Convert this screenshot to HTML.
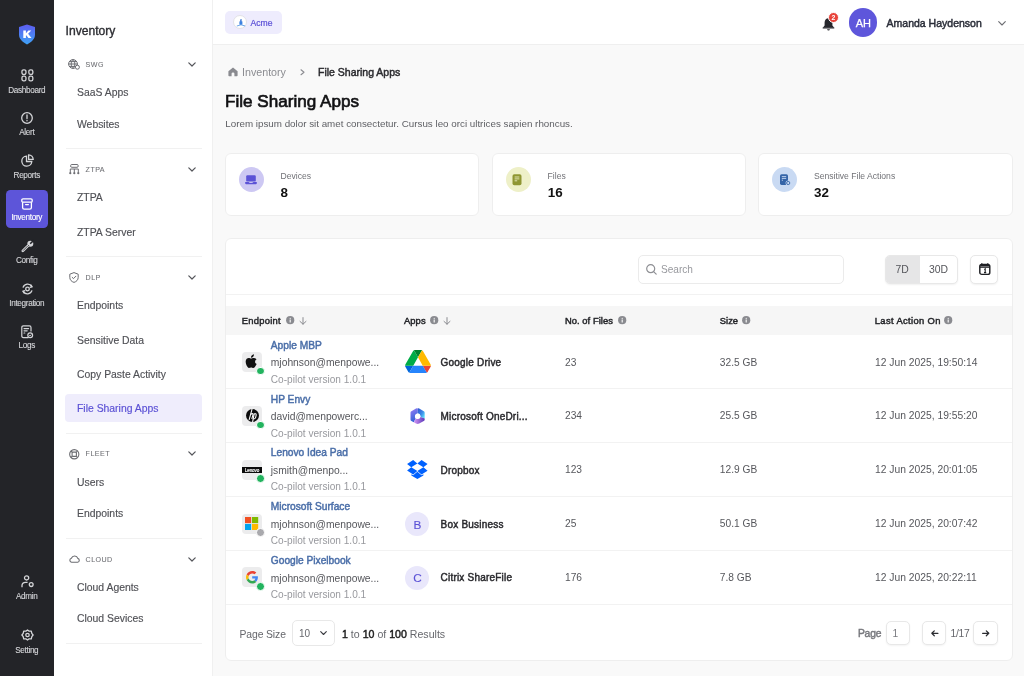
<!DOCTYPE html>
<html><head><meta charset="utf-8">
<style>
*{box-sizing:border-box;margin:0;padding:0}
html,body{width:1024px;height:676px;overflow:hidden}
body{position:relative;background:#f9f9f9;font-family:"Liberation Sans",sans-serif;color:#222}
.a{position:absolute}
.t{position:absolute;white-space:nowrap;line-height:20px;height:20px}
.b{font-weight:bold}
.sb{-webkit-text-stroke-width:0.45px}
svg{position:absolute;overflow:visible}
</style></head><body>
<div id="root" style="position:absolute;left:0;top:0;width:1024px;height:676px;will-change:transform">
<!-- dark rail -->
<div class="a" style="left:0;top:0;width:213px;height:676px;background:#fff;border-right:1px solid #f0f0f0"></div>
<div class="a" style="left:0;top:0;width:53.5px;height:676px;background:#232428"></div>
<!-- top bar -->
<div class="a" style="left:213px;top:0;width:811px;height:45px;background:#fff;border-bottom:1px solid #efefef"></div>

<!-- RAIL -->
<div id="rail" style="color:#d4d5d8;font-size:8.2px;letter-spacing:-0.33px;-webkit-text-stroke-width:0.12px">
<svg style="left:18px;top:23.5px" width="18" height="21" viewBox="0 0 18 21">
<defs><linearGradient id="sg" x1="0" y1="0" x2="0" y2="1"><stop offset="0" stop-color="#5d5cf0"/><stop offset="1" stop-color="#3ea2f5"/></linearGradient></defs>
<path d="M9 0.6 L17 3 L17 10.5 C17 15 13.5 18.3 9 20.4 C4.5 18.3 1 15 1 10.5 L1 3 Z" fill="url(#sg)"/>
<path d="M5.3 6.4 H7.9 V9.3 L10.4 6.4 H13.3 L10.1 9.8 L13.5 14.1 H10.4 L8.3 11.3 L7.9 11.7 V14.1 H5.3 Z" fill="#fff"/>
</svg>
<!-- dashboard -->
<svg style="left:20.5px;top:69px" width="13" height="13" viewBox="0 0 13 13" fill="none" stroke="#d4d5d8" stroke-width="1.3"><rect x="0.95" y="0.85" width="4" height="4.6" rx="1.6"/><rect x="7.85" y="0.85" width="4" height="4.6" rx="1.6"/><rect x="0.95" y="7.2" width="4" height="4.6" rx="1.6"/><rect x="7.85" y="7.2" width="4" height="4.6" rx="1.6"/></svg>
<div class="t" style="left:0;width:53.5px;text-align:center;top:80.6px">Dashboard</div>
<!-- alert -->
<svg style="left:21px;top:111.8px" width="12" height="12" viewBox="0 0 12 12" fill="none" stroke="#d4d5d8" stroke-width="1.3"><circle cx="6" cy="6" r="5.3"/><path d="M6 3 V6.6 M6 8.4 V8.8" stroke-linecap="round"/></svg>
<div class="t" style="left:0;width:53.5px;text-align:center;top:123.2px">Alert</div>
<!-- reports -->
<svg style="left:20.5px;top:154px" width="13" height="13" viewBox="0 0 13 13" fill="none" stroke="#d4d5d8" stroke-width="1.3"><path d="M5.5 2.2 A5 5 0 1 0 10.8 7.5 H5.5 Z"/><path d="M7.6 0.8 A4.6 4.6 0 0 1 12.2 5.4 H7.6 Z"/></svg>
<div class="t" style="left:0;width:53.5px;text-align:center;top:165.8px">Reports</div>
<!-- inventory active -->
<div class="a" style="left:5.6px;top:190.4px;width:42.5px;height:37.2px;background:#5d55d9;border-radius:4.5px"></div>
<svg style="left:21px;top:197.5px" width="12" height="12" viewBox="0 0 12 12" fill="none" stroke="#fff" stroke-width="1.3"><rect x="0.8" y="0.8" width="10.4" height="3.4" rx="1.2"/><path d="M1.6 4.2 V9.6 Q1.6 11.2 3.2 11.2 H8.8 Q10.4 11.2 10.4 9.6 V4.2"/><path d="M4.6 6.6 H7.4" stroke-linecap="round"/></svg>
<div class="t" style="left:0;width:53.5px;text-align:center;top:208.3px;color:#fff">Inventory</div>
<!-- config -->
<svg style="left:20.5px;top:239.5px" width="13" height="13" viewBox="0 0 13 13"><path d="M1.8 10.9 L6.6 6.1" stroke="#d4d5d8" stroke-width="2.7" stroke-linecap="round"/><path d="M2.3 10.4 L6.4 6.3" stroke="#232428" stroke-width="0.75" stroke-linecap="round"/><circle cx="9.3" cy="3.7" r="3" fill="#d4d5d8"/><path d="M9.2 3.8 L12.6 0.4" stroke="#232428" stroke-width="1.5"/><circle cx="7.6" cy="5.4" r="0.5" fill="#232428"/></svg>
<div class="t" style="left:0;width:53.5px;text-align:center;top:251.4px">Config</div>
<!-- integration -->
<svg style="left:20.5px;top:282.5px" width="13" height="12" viewBox="0 0 13 12" fill="none" stroke="#d4d5d8" stroke-width="1.3"><circle cx="6.5" cy="6" r="1.8"/><path d="M2 4.6 A4.8 4.8 0 0 1 10.8 3.6"/><path d="M11 7.4 A4.8 4.8 0 0 1 2.2 8.4"/><path d="M9.6 1.6 L11.2 3.8 L8.8 4.4" stroke-linejoin="round"/><path d="M3.4 10.4 L1.8 8.2 L4.2 7.6" stroke-linejoin="round"/></svg>
<div class="t" style="left:0;width:53.5px;text-align:center;top:293.8px">Integration</div>
<!-- logs -->
<svg style="left:21px;top:324.5px" width="12" height="13.5" viewBox="0 0 12 13.5" fill="none" stroke="#d4d5d8" stroke-width="1.2"><path d="M7.5 12.6 H2.4 Q0.8 12.6 0.8 11 V2.4 Q0.8 0.8 2.4 0.8 H8.4 Q10 0.8 10 2.4 V6.4"/><path d="M3 3.6 H7.6 M3 5.8 H6.2 M3 8 H3.8" stroke-linecap="round"/><circle cx="9.2" cy="10.2" r="2.4"/><path d="M8.2 10.2 L9 11 L10.2 9.6" stroke-width="0.9"/></svg>
<div class="t" style="left:0;width:53.5px;text-align:center;top:336.1px">Logs</div>
<!-- admin -->
<svg style="left:20.5px;top:574.5px" width="13" height="13" viewBox="0 0 13 13" fill="none" stroke="#d4d5d8" stroke-width="1.3"><circle cx="5.6" cy="2.9" r="2.1"/><path d="M1 12.2 V10.6 Q1 7.4 4.6 7.4 H6.6"/><circle cx="10.2" cy="9.6" r="1.9"/></svg>
<div class="t" style="left:0;width:53.5px;text-align:center;top:586.8px">Admin</div>
<!-- setting -->
<svg style="left:20.5px;top:629px" width="13" height="13" viewBox="0 0 13 13" fill="none" stroke="#d4d5d8" stroke-width="1.3"><path d="M6.5 0.9 L8.2 2.2 L10.3 2.2 L10.8 4.3 L12.1 6 L10.8 7.7 L10.3 9.8 L8.2 9.8 L6.5 11.1 L4.8 9.8 L2.7 9.8 L2.2 7.7 L0.9 6 L2.2 4.3 L2.7 2.2 L4.8 2.2 Z" stroke-linejoin="round"/><circle cx="6.5" cy="6" r="1.7"/></svg>
<div class="t" style="left:0;width:53.5px;text-align:center;top:640.8px">Setting</div>
</div>

<!-- SIDEBAR 2 -->
<div id="side">
<div class="t sb" style="left:65.6px;top:20.6px;font-size:12.1px;color:#2c2d32;-webkit-text-stroke-width:0.35px">Inventory</div>
<svg style="left:68px;top:59px" width="12" height="10.5" viewBox="0 0 12 10.5" fill="none" stroke="#6b6c71" stroke-width="1"><circle cx="5" cy="5" r="4.4"/><path d="M0.6 5 H9.4 M5 0.6 C2.6 3 2.6 7 5 9.4 M5 0.6 C7.4 3 7.4 7 5 9.4 M1.4 2.6 H8.6 M1.4 7.4 H8.6"/><circle cx="9.4" cy="8.2" r="2" fill="#fff"/></svg>
<div class="t" style="left:85.6px;top:54.7px;font-size:7.1px;letter-spacing:0.45px;color:#707176;-webkit-text-stroke-width:0.08px">SWG</div>
<svg style="left:188.3px;top:61.7px" width="8" height="5" viewBox="0 0 8 5" fill="none" stroke="#55565b" stroke-width="1.2" stroke-linecap="round" stroke-linejoin="round"><path d="M0.8 0.8 L4 4 L7.2 0.8"/></svg>
<div class="t" style="left:77px;top:83.3px;font-size:10.4px;color:#505156;-webkit-text-stroke-width:0.15px">SaaS Apps</div>
<div class="t" style="left:77px;top:114.5px;font-size:10.4px;color:#505156;-webkit-text-stroke-width:0.15px">Websites</div>
<div class="a" style="left:65.5px;top:147.8px;width:136.5px;height:1px;background:#f1f1f1"></div>
<svg style="left:68.6px;top:163.6px" width="10.5" height="11" viewBox="0 0 10.5 11" fill="none" stroke="#6e6f74" stroke-width="1"><rect x="1.6" y="0.5" width="7.6" height="2.8" rx="1.2"/><path d="M1.3 5 H9.3 M1.3 5 V8.6 M5.3 5 V8.6 M9.3 5 V8.6"/><circle cx="1.3" cy="9.2" r="1.1" fill="#6e6f74" stroke="none"/><circle cx="5.3" cy="9.2" r="1.1" fill="#6e6f74" stroke="none"/><circle cx="9.3" cy="9.2" r="1.1" fill="#6e6f74" stroke="none"/></svg>
<div class="t" style="left:85.6px;top:159.9px;font-size:7.1px;letter-spacing:0.45px;color:#707176;-webkit-text-stroke-width:0.08px">ZTPA</div>
<svg style="left:188.3px;top:166.9px" width="8" height="5" viewBox="0 0 8 5" fill="none" stroke="#55565b" stroke-width="1.2" stroke-linecap="round" stroke-linejoin="round"><path d="M0.8 0.8 L4 4 L7.2 0.8"/></svg>
<div class="t" style="left:77px;top:188.4px;font-size:10.4px;color:#505156;-webkit-text-stroke-width:0.15px">ZTPA</div>
<div class="t" style="left:77px;top:222.8px;font-size:10.4px;color:#505156;-webkit-text-stroke-width:0.15px">ZTPA Server</div>
<div class="a" style="left:65.5px;top:256.0px;width:136.5px;height:1px;background:#f1f1f1"></div>
<svg style="left:69px;top:272px" width="10" height="11" viewBox="0 0 10 11" fill="none" stroke="#6b6c71" stroke-width="1" stroke-linejoin="round"><path d="M5 0.6 L9.2 2.2 V5.4 C9.2 8 7.4 9.6 5 10.4 C2.6 9.6 0.8 8 0.8 5.4 V2.2 Z"/><path d="M3.2 5.4 L4.5 6.6 L6.9 4.2" stroke-linecap="round"/></svg>
<div class="t" style="left:85.6px;top:267.8px;font-size:7.1px;letter-spacing:0.45px;color:#707176;-webkit-text-stroke-width:0.08px">DLP</div>
<svg style="left:188.3px;top:274.8px" width="8" height="5" viewBox="0 0 8 5" fill="none" stroke="#55565b" stroke-width="1.2" stroke-linecap="round" stroke-linejoin="round"><path d="M0.8 0.8 L4 4 L7.2 0.8"/></svg>
<div class="t" style="left:77px;top:296.4px;font-size:10.4px;color:#505156;-webkit-text-stroke-width:0.15px">Endpoints</div>
<div class="t" style="left:77px;top:330.8px;font-size:10.4px;color:#505156;-webkit-text-stroke-width:0.15px">Sensitive Data</div>
<div class="t" style="left:77px;top:365.2px;font-size:10.4px;color:#505156;-webkit-text-stroke-width:0.15px">Copy Paste Activity</div>
<div class="a" style="left:65.4px;top:394px;width:136.4px;height:28px;background:#efedfc;border-radius:4px"></div>
<div class="t" style="left:77px;top:399.0px;font-size:10.4px;color:#5a50d5;-webkit-text-stroke-width:0.15px">File Sharing Apps</div>
<div class="a" style="left:65.5px;top:432.8px;width:136.5px;height:1px;background:#f1f1f1"></div>
<svg style="left:68.8px;top:448.6px" width="10.5" height="10.5" viewBox="0 0 10.5 10.5" fill="none" stroke="#6b6c71" stroke-width="1.1"><circle cx="5.25" cy="5.25" r="4.6"/><rect x="3.1" y="3.1" width="4.3" height="4.3" rx="0.8"/><path d="M2 2 L3.3 3.3 M8.5 2 L7.2 3.3 M2 8.5 L3.3 7.2 M8.5 8.5 L7.2 7.2"/></svg>
<div class="t" style="left:85.6px;top:444.3px;font-size:7.1px;letter-spacing:0.45px;color:#707176;-webkit-text-stroke-width:0.08px">FLEET</div>
<svg style="left:188.3px;top:451.3px" width="8" height="5" viewBox="0 0 8 5" fill="none" stroke="#55565b" stroke-width="1.2" stroke-linecap="round" stroke-linejoin="round"><path d="M0.8 0.8 L4 4 L7.2 0.8"/></svg>
<div class="t" style="left:77px;top:472.9px;font-size:10.4px;color:#505156;-webkit-text-stroke-width:0.15px">Users</div>
<div class="t" style="left:77px;top:504.0px;font-size:10.4px;color:#505156;-webkit-text-stroke-width:0.15px">Endpoints</div>
<div class="a" style="left:65.5px;top:537.7px;width:136.5px;height:1px;background:#f1f1f1"></div>
<svg style="left:68.5px;top:555px" width="11" height="8" viewBox="0 0 11 8" fill="none" stroke="#6b6c71" stroke-width="1.1" stroke-linejoin="round"><path d="M2.6 7.3 H8.6 A2 2 0 0 0 8.8 3.4 A3.4 3.4 0 0 0 2.4 3.2 A2.1 2.1 0 0 0 2.6 7.3 Z"/></svg>
<div class="t" style="left:85.6px;top:549.6px;font-size:7.1px;letter-spacing:0.45px;color:#707176;-webkit-text-stroke-width:0.08px">CLOUD</div>
<svg style="left:188.3px;top:556.6px" width="8" height="5" viewBox="0 0 8 5" fill="none" stroke="#55565b" stroke-width="1.2" stroke-linecap="round" stroke-linejoin="round"><path d="M0.8 0.8 L4 4 L7.2 0.8"/></svg>
<div class="t" style="left:77px;top:578.2px;font-size:10.4px;color:#505156;-webkit-text-stroke-width:0.15px">Cloud Agents</div>
<div class="t" style="left:77px;top:609.3px;font-size:10.4px;color:#505156;-webkit-text-stroke-width:0.15px">Cloud Sevices</div>
<div class="a" style="left:65.5px;top:642.8px;width:136.5px;height:1px;background:#f1f1f1"></div>
</div>

<!-- HEADER -->
<div id="header">
<div class="a" style="left:224.8px;top:11px;width:57px;height:22.7px;background:#eeecfd;border-radius:5px"></div>
<div class="a" style="left:233.4px;top:15.3px;width:14px;height:14px;background:#fff;border:1px solid #e2e2e6;border-radius:50%"></div>
<svg style="left:235.5px;top:18px" width="10" height="9" viewBox="0 0 10 9"><path d="M4.2 1.6 L5.6 1 L5.6 6.4 L4.2 6.4 Z" fill="#2f6fd0"/><path d="M3.4 3.4 H6.4 V6.6 H3.4Z" fill="#3b82e0"/><path d="M0.8 8 Q5 5.6 9.2 8" stroke="#4a90e2" stroke-width="0.8" fill="none"/></svg>
<div class="t sb" style="left:250.5px;top:12.5px;font-size:8.6px;color:#5a4fd6;-webkit-text-stroke-width:0.2px">Acme</div>
<!-- bell -->
<svg style="left:821.5px;top:16.5px" width="13" height="14" viewBox="0 0 13 14"><path d="M6.5 1.2 C4 1.2 2.6 3.2 2.6 5.6 V8.4 L1 10.6 H12 L10.4 8.4 V5.6 C10.4 3.2 9 1.2 6.5 1.2 Z" fill="#26272c"/><rect x="0.6" y="10.2" width="11.8" height="1.4" rx="0.7" fill="#26272c"/><path d="M5 12.2 H8 Q7.6 13.4 6.5 13.4 Q5.4 13.4 5 12.2Z" fill="#26272c"/></svg>
<div class="a" style="left:827.6px;top:11.8px;width:11.6px;height:11.6px;background:#e8433b;border-radius:50%;border:1px solid #fff"></div>
<div class="t b" style="left:827.6px;width:11.6px;text-align:center;top:7.6px;font-size:6.8px;color:#fff">2</div>
<!-- avatar -->
<div class="a" style="left:848.9px;top:8.4px;width:28.6px;height:28.6px;background:#5e56db;border-radius:50%"></div>
<div class="t" style="left:848.9px;width:28.6px;text-align:center;top:12.6px;font-size:11px;color:#fff;letter-spacing:-0.3px;-webkit-text-stroke-width:0.25px">AH</div>
<div class="t sb" style="left:886.6px;top:12.5px;font-size:10.5px;color:#2a2d38">Amanda Haydenson</div>
<svg style="left:998.2px;top:20.6px" width="8" height="5" viewBox="0 0 8 5" fill="none" stroke="#6d6e73" stroke-width="1.1" stroke-linecap="round" stroke-linejoin="round"><path d="M0.7 0.7 L4 4 L7.3 0.7"/></svg>
</div>

<!-- MAIN -->
<div id="main">
<svg style="left:228.4px;top:67.2px" width="10" height="9.4" viewBox="0 0 10 9.4"><path d="M5 0.4 L9.6 4.2 V8.4 Q9.6 9.2 8.8 9.2 H6.4 V6.6 Q6.4 5.4 5 5.4 Q3.6 5.4 3.6 6.6 V9.2 H1.2 Q0.4 9.2 0.4 8.4 V4.2 Z" fill="#8a8b90"/></svg>
<div class="t" style="left:242px;top:62px;font-size:10.7px;color:#8b8c91">Inventory</div>
<svg style="left:299.8px;top:68.6px" width="5" height="6.5" viewBox="0 0 5 6.5" fill="none" stroke="#8b8c91" stroke-width="1.1" stroke-linecap="round" stroke-linejoin="round"><path d="M1 0.8 L4 3.25 L1 5.7"/></svg>
<div class="t sb" style="left:318px;top:62px;font-size:10.5px;color:#2a2a2e">File Sharing Apps</div>
<div class="t sb" style="left:225px;top:92.4px;font-size:17.1px;color:#111113;-webkit-text-stroke-width:0.65px">File Sharing Apps</div>
<div class="t" style="left:225.3px;top:114px;font-size:9.8px;color:#5f6065">Lorem ipsum dolor sit amet consectetur. Cursus leo orci ultrices sapien rhoncus.</div>
<div class="a" style="left:224.8px;top:153.3px;width:253.8px;height:62.3px;background:#fff;border:1px solid #eeeeee;border-radius:6px"></div>
<div class="a" style="left:238.5px;top:167.1px;width:25.3px;height:25.3px;background:#cdc8f3;border-radius:50%"></div>
<svg style="left:245.2px;top:175px" width="12" height="9.5" viewBox="0 0 12 9.5"><rect x="1.2" y="0.2" width="9.6" height="6.4" rx="1.2" fill="#5b52d6"/><path d="M0.2 6.9 H3.6 Q4.2 7.9 6 7.9 Q7.8 7.9 8.4 6.9 H11.8 V8.3 Q11.8 9.3 10.8 9.3 H1.2 Q0.2 9.3 0.2 8.3 Z" fill="#5b52d6"/></svg>
<div class="t" style="left:280.5px;top:165.5px;font-size:8.6px;color:#707176">Devices</div>
<div class="t b" style="left:280.6px;top:182.9px;font-size:13.4px;color:#111">8</div>
<div class="a" style="left:491.9px;top:153.3px;width:253.8px;height:62.3px;background:#fff;border:1px solid #eeeeee;border-radius:6px"></div>
<div class="a" style="left:505.6px;top:167.1px;width:25.3px;height:25.3px;background:#eef0c8;border-radius:50%"></div>
<svg style="left:512.2px;top:174px" width="10" height="11.5" viewBox="0 0 10 11.5"><rect x="0.5" y="0.3" width="9" height="11" rx="1.8" fill="#8f9632"/><path d="M2.6 3 H7.4 M2.6 4.9 H7.4 M2.6 6.8 H5.2" stroke="#e9ecbf" stroke-width="0.9"/></svg>
<div class="t" style="left:547.6px;top:165.5px;font-size:8.6px;color:#707176">Files</div>
<div class="t b" style="left:547.7px;top:182.9px;font-size:13.4px;color:#111">16</div>
<div class="a" style="left:758.3px;top:153.3px;width:254.4px;height:62.3px;background:#fff;border:1px solid #eeeeee;border-radius:6px"></div>
<div class="a" style="left:772.0px;top:167.1px;width:25.3px;height:25.3px;background:#c9daf3;border-radius:50%"></div>
<svg style="left:778.6px;top:173.5px" width="12" height="12" viewBox="0 0 12 12"><rect x="1" y="0.3" width="8" height="10.6" rx="1.6" fill="#3565a8"/><path d="M2.8 2.6 H7.2 M2.8 4.4 H7.2 M2.8 6.2 H4" stroke="#c9daf3" stroke-width="0.9"/><circle cx="9.2" cy="9" r="2.6" fill="#c9daf3"/><circle cx="9.2" cy="9" r="1.6" fill="none" stroke="#3565a8" stroke-width="0.9"/></svg>
<div class="t" style="left:814.0px;top:165.5px;font-size:8.6px;color:#707176">Sensitive File Actions</div>
<div class="t b" style="left:814.1px;top:182.9px;font-size:13.4px;color:#111">32</div>
<div class="a" style="left:224.8px;top:237.9px;width:788.2px;height:423.2px;background:#fff;border:1px solid #eeeeee;border-radius:6px;overflow:hidden">
</div>
<div class="a" style="left:638.3px;top:255.3px;width:206px;height:28.3px;background:#fff;border:1px solid #ebebeb;border-radius:5px"></div>
<svg style="left:646px;top:264px" width="11" height="11" viewBox="0 0 11 11" fill="none" stroke="#8e8f94" stroke-width="1.2" stroke-linecap="round"><circle cx="4.7" cy="4.7" r="4"/><path d="M7.6 7.6 L10.2 10.2"/></svg>
<div class="t" style="left:661px;top:260.2px;font-size:10.1px;color:#98999e">Search</div>
<div class="a" style="left:885.2px;top:255.3px;width:73px;height:28.3px;background:#fff;border:1px solid #e8e8e8;border-radius:5px;box-shadow:0 1px 2px rgba(0,0,0,0.06);overflow:hidden"><div class="a" style="left:0;top:0;width:33.9px;height:28.3px;background:#e6e6e7"></div></div>
<div class="t" style="left:885.2px;width:33.9px;text-align:center;top:259.5px;font-size:10.4px;color:#55565b">7D</div>
<div class="t" style="left:919.1px;width:39px;text-align:center;top:259.5px;font-size:10.4px;color:#55565b">30D</div>
<div class="a" style="left:970.4px;top:255.3px;width:27.7px;height:28.3px;background:#fff;border:1px solid #e8e8e8;border-radius:5px;box-shadow:0 1px 2px rgba(0,0,0,0.06)"></div>
<svg style="left:978.6px;top:263.4px" width="11.6" height="12.2" viewBox="0 0 11.6 12.2" fill="none" stroke="#1f2024" stroke-width="1.45"><rect x="0.8" y="1.6" width="10" height="9.8" rx="2"/><path d="M0.8 4.2 H10.8" stroke-width="1.2"/><path d="M1.4 2.6 H10.2" stroke-width="1.6"/><path d="M2.8 0.2 V2 M8.8 0.2 V2" stroke-width="1.3"/><path d="M5.3 6.6 L6.2 5.8 V9.6 M5 9.6 H7.2" stroke-width="1.1"/></svg>
<div class="a" style="left:225.8px;top:294px;width:786.2px;height:1px;background:#f2f2f2"></div>
<div class="a" style="left:225.8px;top:306.2px;width:786.2px;height:28.4px;background:#f6f6f6"></div>
<div class="t sb" style="left:241.8px;top:311.2px;font-size:9.4px;letter-spacing:0.25px;color:#232428">Endpoint</div>
<svg style="left:285.9px;top:316.4px" width="8.4" height="8.4" viewBox="0 0 8.4 8.4"><circle cx="4.2" cy="4.2" r="4.1" fill="#8a8b90"/><path d="M4.2 3.6 V6.4" stroke="#fff" stroke-width="1.1"/><circle cx="4.2" cy="2.3" r="0.6" fill="#fff"/></svg>
<svg style="left:299px;top:317px" width="8" height="8" viewBox="0 0 8 8" fill="none" stroke="#8a8b90" stroke-width="1" stroke-linecap="round" stroke-linejoin="round"><path d="M4 0.6 V7.2 M1 4.4 L4 7.2 L7 4.4"/></svg>
<div class="t sb" style="left:403.9px;top:311.2px;font-size:9.4px;letter-spacing:0.12px;color:#232428">Apps</div>
<svg style="left:430.4px;top:316.4px" width="8.4" height="8.4" viewBox="0 0 8.4 8.4"><circle cx="4.2" cy="4.2" r="4.1" fill="#8a8b90"/><path d="M4.2 3.6 V6.4" stroke="#fff" stroke-width="1.1"/><circle cx="4.2" cy="2.3" r="0.6" fill="#fff"/></svg>
<svg style="left:443.2px;top:317px" width="8" height="8" viewBox="0 0 8 8" fill="none" stroke="#8a8b90" stroke-width="1" stroke-linecap="round" stroke-linejoin="round"><path d="M4 0.6 V7.2 M1 4.4 L4 7.2 L7 4.4"/></svg>
<div class="t sb" style="left:564.9px;top:311.2px;font-size:9.4px;letter-spacing:0.06px;color:#232428">No. of Files</div>
<svg style="left:617.9px;top:316.4px" width="8.4" height="8.4" viewBox="0 0 8.4 8.4"><circle cx="4.2" cy="4.2" r="4.1" fill="#8a8b90"/><path d="M4.2 3.6 V6.4" stroke="#fff" stroke-width="1.1"/><circle cx="4.2" cy="2.3" r="0.6" fill="#fff"/></svg>
<div class="t sb" style="left:719.8px;top:311.2px;font-size:9.4px;letter-spacing:0px;color:#232428">Size</div>
<svg style="left:742.3px;top:316.4px" width="8.4" height="8.4" viewBox="0 0 8.4 8.4"><circle cx="4.2" cy="4.2" r="4.1" fill="#8a8b90"/><path d="M4.2 3.6 V6.4" stroke="#fff" stroke-width="1.1"/><circle cx="4.2" cy="2.3" r="0.6" fill="#fff"/></svg>
<div class="t sb" style="left:874.8px;top:311.2px;font-size:9.4px;letter-spacing:0.36px;color:#232428">Last Action On</div>
<svg style="left:944.2px;top:316.4px" width="8.4" height="8.4" viewBox="0 0 8.4 8.4"><circle cx="4.2" cy="4.2" r="4.1" fill="#8a8b90"/><path d="M4.2 3.6 V6.4" stroke="#fff" stroke-width="1.1"/><circle cx="4.2" cy="2.3" r="0.6" fill="#fff"/></svg>
<div class="a" style="left:241.8px;top:352.0px;width:20px;height:20px;background:#ececed;border-radius:4px"></div>
<svg style="left:245.3px;top:354.4px" width="13" height="14.2" viewBox="0.8 0 10 11.2"><path d="M8.6 6.4 C8.6 5 9.7 4.3 9.8 4.2 C9.1 3.2 8 3.1 7.7 3.1 C6.8 3 5.9 3.6 5.5 3.6 C5 3.6 4.3 3.1 3.6 3.1 C2.6 3.1 1.2 3.9 1.2 5.9 C1.2 8 2.7 11 3.8 11 C4.4 11 4.8 10.6 5.5 10.6 C6.3 10.6 6.6 11 7.2 11 C8.2 11 9.1 9.3 9.9 7.9 C8.9 7.5 8.6 6.9 8.6 6.4 Z M7.1 2.2 C7.6 1.6 7.8 0.9 7.7 0.2 C7.1 0.3 6.4 0.6 6 1.2 C5.6 1.6 5.3 2.3 5.4 3 C6.1 3 6.7 2.7 7.1 2.2 Z" fill="#111"/></svg>
<div class="a" style="left:256.2px;top:366.6px;width:8.6px;height:8.6px;background:#22b35e;border-radius:50%;border:1px solid #fff"></div>
<div class="t sb" style="left:270.8px;top:335.7px;font-size:10.2px;color:#4a6ea8">Apple MBP</div>
<div class="t" style="left:270.8px;top:353.1px;font-size:10.3px;color:#56575c">mjohnson@menpowe...</div>
<div class="t" style="left:270.8px;top:369.7px;font-size:10.1px;color:#98999e">Co-pilot version 1.0.1</div>
<svg style="left:404.5px;top:350.3px" width="26" height="23" viewBox="0 0 87.3 78"><path d="m6.6 66.85 3.85 6.65c.8 1.4 1.95 2.5 3.3 3.3l13.75-23.8h-27.5c0 1.55.4 3.1 1.2 4.5z" fill="#0066da"/><path d="m43.65 25-13.75-23.8c-1.35.8-2.5 1.9-3.3 3.3l-25.4 44a9.06 9.06 0 0 0 -1.2 4.5h27.5z" fill="#00ac47"/><path d="m73.55 76.8c1.35-.8 2.5-1.9 3.3-3.3l1.6-2.75 7.65-13.25c.8-1.4 1.2-2.95 1.2-4.5h-27.502l5.852 11.5z" fill="#ea4335"/><path d="m43.65 25 13.75-23.8c-1.35-.8-2.9-1.2-4.5-1.2h-18.5c-1.6 0-3.15.45-4.5 1.2z" fill="#00832d"/><path d="m59.8 53h-32.3l-13.75 23.8c1.35.8 2.9 1.2 4.5 1.2h50.8c1.6 0 3.15-.45 4.5-1.2z" fill="#2684fc"/><path d="m73.4 26.5-12.7-22c-.8-1.4-1.95-2.5-3.3-3.3l-13.75 23.8 16.15 28h27.45c0-1.55-.4-3.1-1.2-4.5z" fill="#ffba00"/></svg>
<div class="t sb" style="left:440.6px;top:352.9px;font-size:10.0px;letter-spacing:0.2px;color:#2a2a2e">Google Drive</div>
<div class="t" style="left:565px;top:352.5px;font-size:10.2px;color:#56575c">23</div>
<div class="t" style="left:719.8px;top:352.5px;font-size:10.2px;color:#56575c">32.5 GB</div>
<div class="t" style="left:875px;top:352.5px;font-size:10.3px;color:#56575c">12 Jun 2025, 19:50:14</div>
<div class="a" style="left:225.8px;top:388.1px;width:786.2px;height:1px;background:#f2f2f2"></div>
<div class="a" style="left:241.8px;top:405.9px;width:20px;height:20px;background:#ececed;border-radius:4px"></div>
<svg style="left:245.9px;top:409.2px" width="13" height="13" viewBox="0 0 13 13"><circle cx="6.5" cy="6.5" r="6.5" fill="#0d0d0d"/><g stroke="#fff" stroke-width="1.05" fill="none" stroke-linecap="butt"><path d="M6.1 -0.2 L3.1 10.8"/><path d="M4.6 5.4 Q5.4 4.6 6.4 4.6 Q7.2 4.7 7 5.6 L5.8 10"/><path d="M8.2 4.7 L6.6 13.2"/><path d="M8 5 Q8.9 4.6 9.7 4.8 Q10.4 5.2 10.1 6.4 L9.6 8.6 Q9.2 9.9 7.4 9.9"/></g></svg>
<div class="a" style="left:256.2px;top:420.5px;width:8.6px;height:8.6px;background:#22b35e;border-radius:50%;border:1px solid #fff"></div>
<div class="t sb" style="left:270.8px;top:389.6px;font-size:10.2px;color:#4a6ea8">HP Envy</div>
<div class="t" style="left:270.8px;top:407.0px;font-size:10.3px;color:#56575c">david@menpowerc...</div>
<div class="t" style="left:270.8px;top:423.6px;font-size:10.1px;color:#98999e">Co-pilot version 1.0.1</div>
<svg style="left:409.8px;top:408.1px" width="15.2" height="16.4" viewBox="0 0 15.2 16.4"><defs><linearGradient id="o1" x1="0" y1="0" x2="0.3" y2="1"><stop offset="0" stop-color="#9a7cf6"/><stop offset="1" stop-color="#2f62d6"/></linearGradient><linearGradient id="o2" x1="0" y1="0" x2="1" y2="0.8"><stop offset="0" stop-color="#3050cf"/><stop offset="0.6" stop-color="#3a8ae8"/><stop offset="1" stop-color="#5ee0fa"/></linearGradient><linearGradient id="o3" x1="0" y1="0" x2="1" y2="0"><stop offset="0" stop-color="#d59af7"/><stop offset="1" stop-color="#5a36b8"/></linearGradient></defs><path d="M7.6 0.4 Q6.8 0 6 0.5 L1.4 3.2 Q0.5 3.7 0.5 4.7 V11.4 Q0.5 12.4 1.4 12.9 L3.8 14.3 L5.6 10.6 Q4.6 9.4 5 7.6 Q5.6 5.6 7.8 5.3 Z" fill="url(#o1)"/><path d="M7.6 0.4 Q8.4 0 9.2 0.5 L13.8 3.2 Q14.7 3.7 14.7 4.7 V10.4 L10.6 8.9 Q10.6 6 7.8 5.3 Z" fill="url(#o2)"/><path d="M3.8 14.3 L6 15.6 Q7.6 16.5 9.2 15.6 L13.8 13 Q14.7 12.4 14.7 11.4 V10.4 L10.6 8.9 Q10 10.8 7.8 11 Q6.3 11.1 5.6 10.6 Z" fill="url(#o3)"/><circle cx="7.75" cy="8.2" r="2.45" fill="#fff"/></svg>
<div class="t sb" style="left:440.6px;top:406.8px;font-size:10.0px;letter-spacing:0.2px;color:#2a2a2e">Microsoft OneDri...</div>
<div class="t" style="left:565px;top:406.4px;font-size:10.2px;color:#56575c">234</div>
<div class="t" style="left:719.8px;top:406.4px;font-size:10.2px;color:#56575c">25.5 GB</div>
<div class="t" style="left:875px;top:406.4px;font-size:10.3px;color:#56575c">12 Jun 2025, 19:55:20</div>
<div class="a" style="left:225.8px;top:442.0px;width:786.2px;height:1px;background:#f2f2f2"></div>
<div class="a" style="left:241.8px;top:459.7px;width:20px;height:20px;background:#ececed;border-radius:4px"></div>
<svg style="left:241.8px;top:467.1px" width="20" height="6.5" viewBox="0 0 20 6.5"><rect x="0" y="0" width="20" height="6" fill="#0b0b0b"/><text x="10" y="4.6" font-family="Liberation Sans" font-size="4.6" fill="#fff" stroke="#fff" stroke-width="0.15" text-anchor="middle" textLength="14.5">Lenovo</text></svg>
<div class="a" style="left:256.2px;top:474.3px;width:8.6px;height:8.6px;background:#22b35e;border-radius:50%;border:1px solid #fff"></div>
<div class="t sb" style="left:270.8px;top:443.4px;font-size:10.2px;color:#4a6ea8">Lenovo Idea Pad</div>
<div class="t" style="left:270.8px;top:460.8px;font-size:10.3px;color:#56575c">jsmith@menpo...</div>
<div class="t" style="left:270.8px;top:477.4px;font-size:10.1px;color:#98999e">Co-pilot version 1.0.1</div>
<svg style="left:407px;top:460.3px" width="21" height="18.4" viewBox="0 0 43 38"><path fill="#0061fe" d="M12.5 0 0 8.1l8.6 6.9 12.6-7.8L12.5 0zM0 21.9l12.5 8.2 8.7-7.3-12.6-7.8L0 21.9zm21.2.9 8.7 7.3 12.4-8.1-8.6-6.9-12.5 7.7zm21.1-14.7L29.9 0l-8.7 7.2 12.5 7.8 8.6-6.9zM21.2 24.4l-8.7 7.3-3.7-2.4v2.7l12.4 7.5 12.5-7.5v-2.7l-3.8 2.4-8.7-7.3z"/></svg>
<div class="t sb" style="left:440.6px;top:460.6px;font-size:10.0px;letter-spacing:0.2px;color:#2a2a2e">Dropbox</div>
<div class="t" style="left:565px;top:460.2px;font-size:10.2px;color:#56575c">123</div>
<div class="t" style="left:719.8px;top:460.2px;font-size:10.2px;color:#56575c">12.9 GB</div>
<div class="t" style="left:875px;top:460.2px;font-size:10.3px;color:#56575c">12 Jun 2025, 20:01:05</div>
<div class="a" style="left:225.8px;top:495.8px;width:786.2px;height:1px;background:#f2f2f2"></div>
<div class="a" style="left:241.8px;top:513.6px;width:20px;height:20px;background:#ececed;border-radius:4px"></div>
<svg style="left:245.1px;top:516.9px" width="13.2" height="13" viewBox="0 0 13.2 13"><rect x="0" y="0" width="6.2" height="6.1" fill="#f25022"/><rect x="7" y="0" width="6.2" height="6.1" fill="#7fba00"/><rect x="0" y="6.9" width="6.2" height="6.1" fill="#00a4ef"/><rect x="7" y="6.9" width="6.2" height="6.1" fill="#ffb900"/></svg>
<div class="a" style="left:256.2px;top:528.1px;width:8.6px;height:8.6px;background:#a9a9ad;border-radius:50%;border:1px solid #fff"></div>
<div class="t sb" style="left:270.8px;top:497.2px;font-size:10.2px;color:#4a6ea8">Microsoft Surface</div>
<div class="t" style="left:270.8px;top:514.6px;font-size:10.3px;color:#56575c">mjohnson@menpowe...</div>
<div class="t" style="left:270.8px;top:531.2px;font-size:10.1px;color:#98999e">Co-pilot version 1.0.1</div>
<div class="a" style="left:405.3px;top:512.0px;width:24px;height:24px;background:#e9e7fb;border-radius:50%"></div>
<div class="t" style="left:405.4px;width:24px;text-align:center;top:514.6px;font-size:11.8px;color:#5b52d6;-webkit-text-stroke-width:0.12px">B</div>
<div class="t sb" style="left:440.6px;top:514.5px;font-size:10.0px;letter-spacing:0.2px;color:#2a2a2e">Box Business</div>
<div class="t" style="left:565px;top:514.1px;font-size:10.2px;color:#56575c">25</div>
<div class="t" style="left:719.8px;top:514.1px;font-size:10.2px;color:#56575c">50.1 GB</div>
<div class="t" style="left:875px;top:514.1px;font-size:10.3px;color:#56575c">12 Jun 2025, 20:07:42</div>
<div class="a" style="left:225.8px;top:549.6px;width:786.2px;height:1px;background:#f2f2f2"></div>
<div class="a" style="left:241.8px;top:567.4px;width:20px;height:20px;background:#ececed;border-radius:4px"></div>
<svg style="left:246px;top:571.0px" width="12.4" height="12.4" viewBox="0 0 48 48"><path fill="#EA4335" d="M24 9.5c3.5 0 6.6 1.2 9.1 3.5l6.8-6.8C35.8 2.4 30.3 0 24 0 14.6 0 6.6 5.4 2.6 13.2l7.9 6.2C12.4 13.6 17.7 9.5 24 9.5z"/><path fill="#4285F4" d="M46.1 24.5c0-1.6-.1-3.1-.4-4.5H24v9h12.4c-.5 2.9-2.2 5.3-4.7 7l7.6 5.9c4.4-4.1 6.8-10.1 6.8-17.4z"/><path fill="#FBBC05" d="M10.5 28.6c-.5-1.4-.8-3-.8-4.6s.3-3.2.8-4.6l-7.9-6.2C.9 16.5 0 20.1 0 24s.9 7.5 2.6 10.8l7.9-6.2z"/><path fill="#34A853" d="M24 48c6.5 0 11.9-2.1 15.9-5.8l-7.6-5.9c-2.1 1.4-4.9 2.3-8.3 2.3-6.3 0-11.6-4.2-13.5-9.9l-7.9 6.2C6.6 42.6 14.6 48 24 48z"/></svg>
<div class="a" style="left:256.2px;top:582.0px;width:8.6px;height:8.6px;background:#22b35e;border-radius:50%;border:1px solid #fff"></div>
<div class="t sb" style="left:270.8px;top:551.1px;font-size:10.2px;color:#4a6ea8">Google Pixelbook</div>
<div class="t" style="left:270.8px;top:568.5px;font-size:10.3px;color:#56575c">mjohnson@menpowe...</div>
<div class="t" style="left:270.8px;top:585.1px;font-size:10.1px;color:#98999e">Co-pilot version 1.0.1</div>
<div class="a" style="left:405.3px;top:565.8px;width:24px;height:24px;background:#e9e7fb;border-radius:50%"></div>
<div class="t" style="left:405.4px;width:24px;text-align:center;top:568.4px;font-size:11.8px;color:#5b52d6;-webkit-text-stroke-width:0.12px">C</div>
<div class="t sb" style="left:440.6px;top:568.3px;font-size:10.0px;letter-spacing:0.2px;color:#2a2a2e">Citrix ShareFile</div>
<div class="t" style="left:565px;top:567.9px;font-size:10.2px;color:#56575c">176</div>
<div class="t" style="left:719.8px;top:567.9px;font-size:10.2px;color:#56575c">7.8 GB</div>
<div class="t" style="left:875px;top:567.9px;font-size:10.3px;color:#56575c">12 Jun 2025, 20:22:11</div>
<div class="a" style="left:225.8px;top:603.5px;width:786.2px;height:1px;background:#f2f2f2"></div>
<div class="t" style="left:239.5px;top:624.6px;font-size:10.4px;letter-spacing:-0.12px;color:#66676c">Page Size</div>
<div class="a" style="left:291.7px;top:620.4px;width:43.8px;height:25.2px;background:#fff;border:1px solid #e8e8e8;border-radius:5px"></div>
<div class="t" style="left:299px;top:623.6px;font-size:10px;color:#66676c">10</div>
<svg style="left:319.8px;top:631px" width="7" height="4.5" viewBox="0 0 7 4.5" fill="none" stroke="#3a3b40" stroke-width="1.1" stroke-linecap="round" stroke-linejoin="round"><path d="M0.7 0.7 L3.5 3.5 L6.3 0.7"/></svg>
<div class="t" style="left:342px;top:623.6px;font-size:10.6px;color:#66676c"><span class="sb" style="color:#222">1</span> to <span class="sb" style="color:#222">10</span> of <span class="sb" style="color:#222">100</span> Results</div>
<div class="t sb" style="left:857.9px;top:623.5px;font-size:10.3px;letter-spacing:-0.15px;color:#77787d">Page</div>
<div class="a" style="left:885.6px;top:620.8px;width:24.6px;height:24.7px;background:#fff;border:1px solid #e8e8e8;border-radius:5px;box-shadow:0 1px 2px rgba(0,0,0,0.05)"></div>
<div class="t" style="left:892.4px;top:624.2px;font-size:10.2px;color:#7a7b80">1</div>
<div class="a" style="left:921.9px;top:620.8px;width:24.6px;height:24.7px;background:#fff;border:1px solid #e8e8e8;border-radius:5px;box-shadow:0 1px 2px rgba(0,0,0,0.05)"></div>
<svg style="left:930.6px;top:629.5px" width="7.6" height="6.6" viewBox="0 0 7.6 6.6" fill="none" stroke="#2a2b30" stroke-width="1.2" stroke-linecap="round" stroke-linejoin="round"><path d="M7 3.3 H0.8 M3.3 0.8 L0.8 3.3 L3.3 5.8"/></svg>
<div class="t" style="left:950.5px;top:623.5px;font-size:10.3px;letter-spacing:-0.25px;color:#66676c">1/17</div>
<div class="a" style="left:973.4px;top:620.8px;width:24.6px;height:24.7px;background:#fff;border:1px solid #e8e8e8;border-radius:5px;box-shadow:0 1px 2px rgba(0,0,0,0.05)"></div>
<svg style="left:981.6px;top:629.5px" width="7.6" height="6.6" viewBox="0 0 7.6 6.6" fill="none" stroke="#2a2b30" stroke-width="1.2" stroke-linecap="round" stroke-linejoin="round"><path d="M0.6 3.3 H6.8 M4.3 0.8 L6.8 3.3 L4.3 5.8"/></svg>
</div>
</div>
</body></html>
